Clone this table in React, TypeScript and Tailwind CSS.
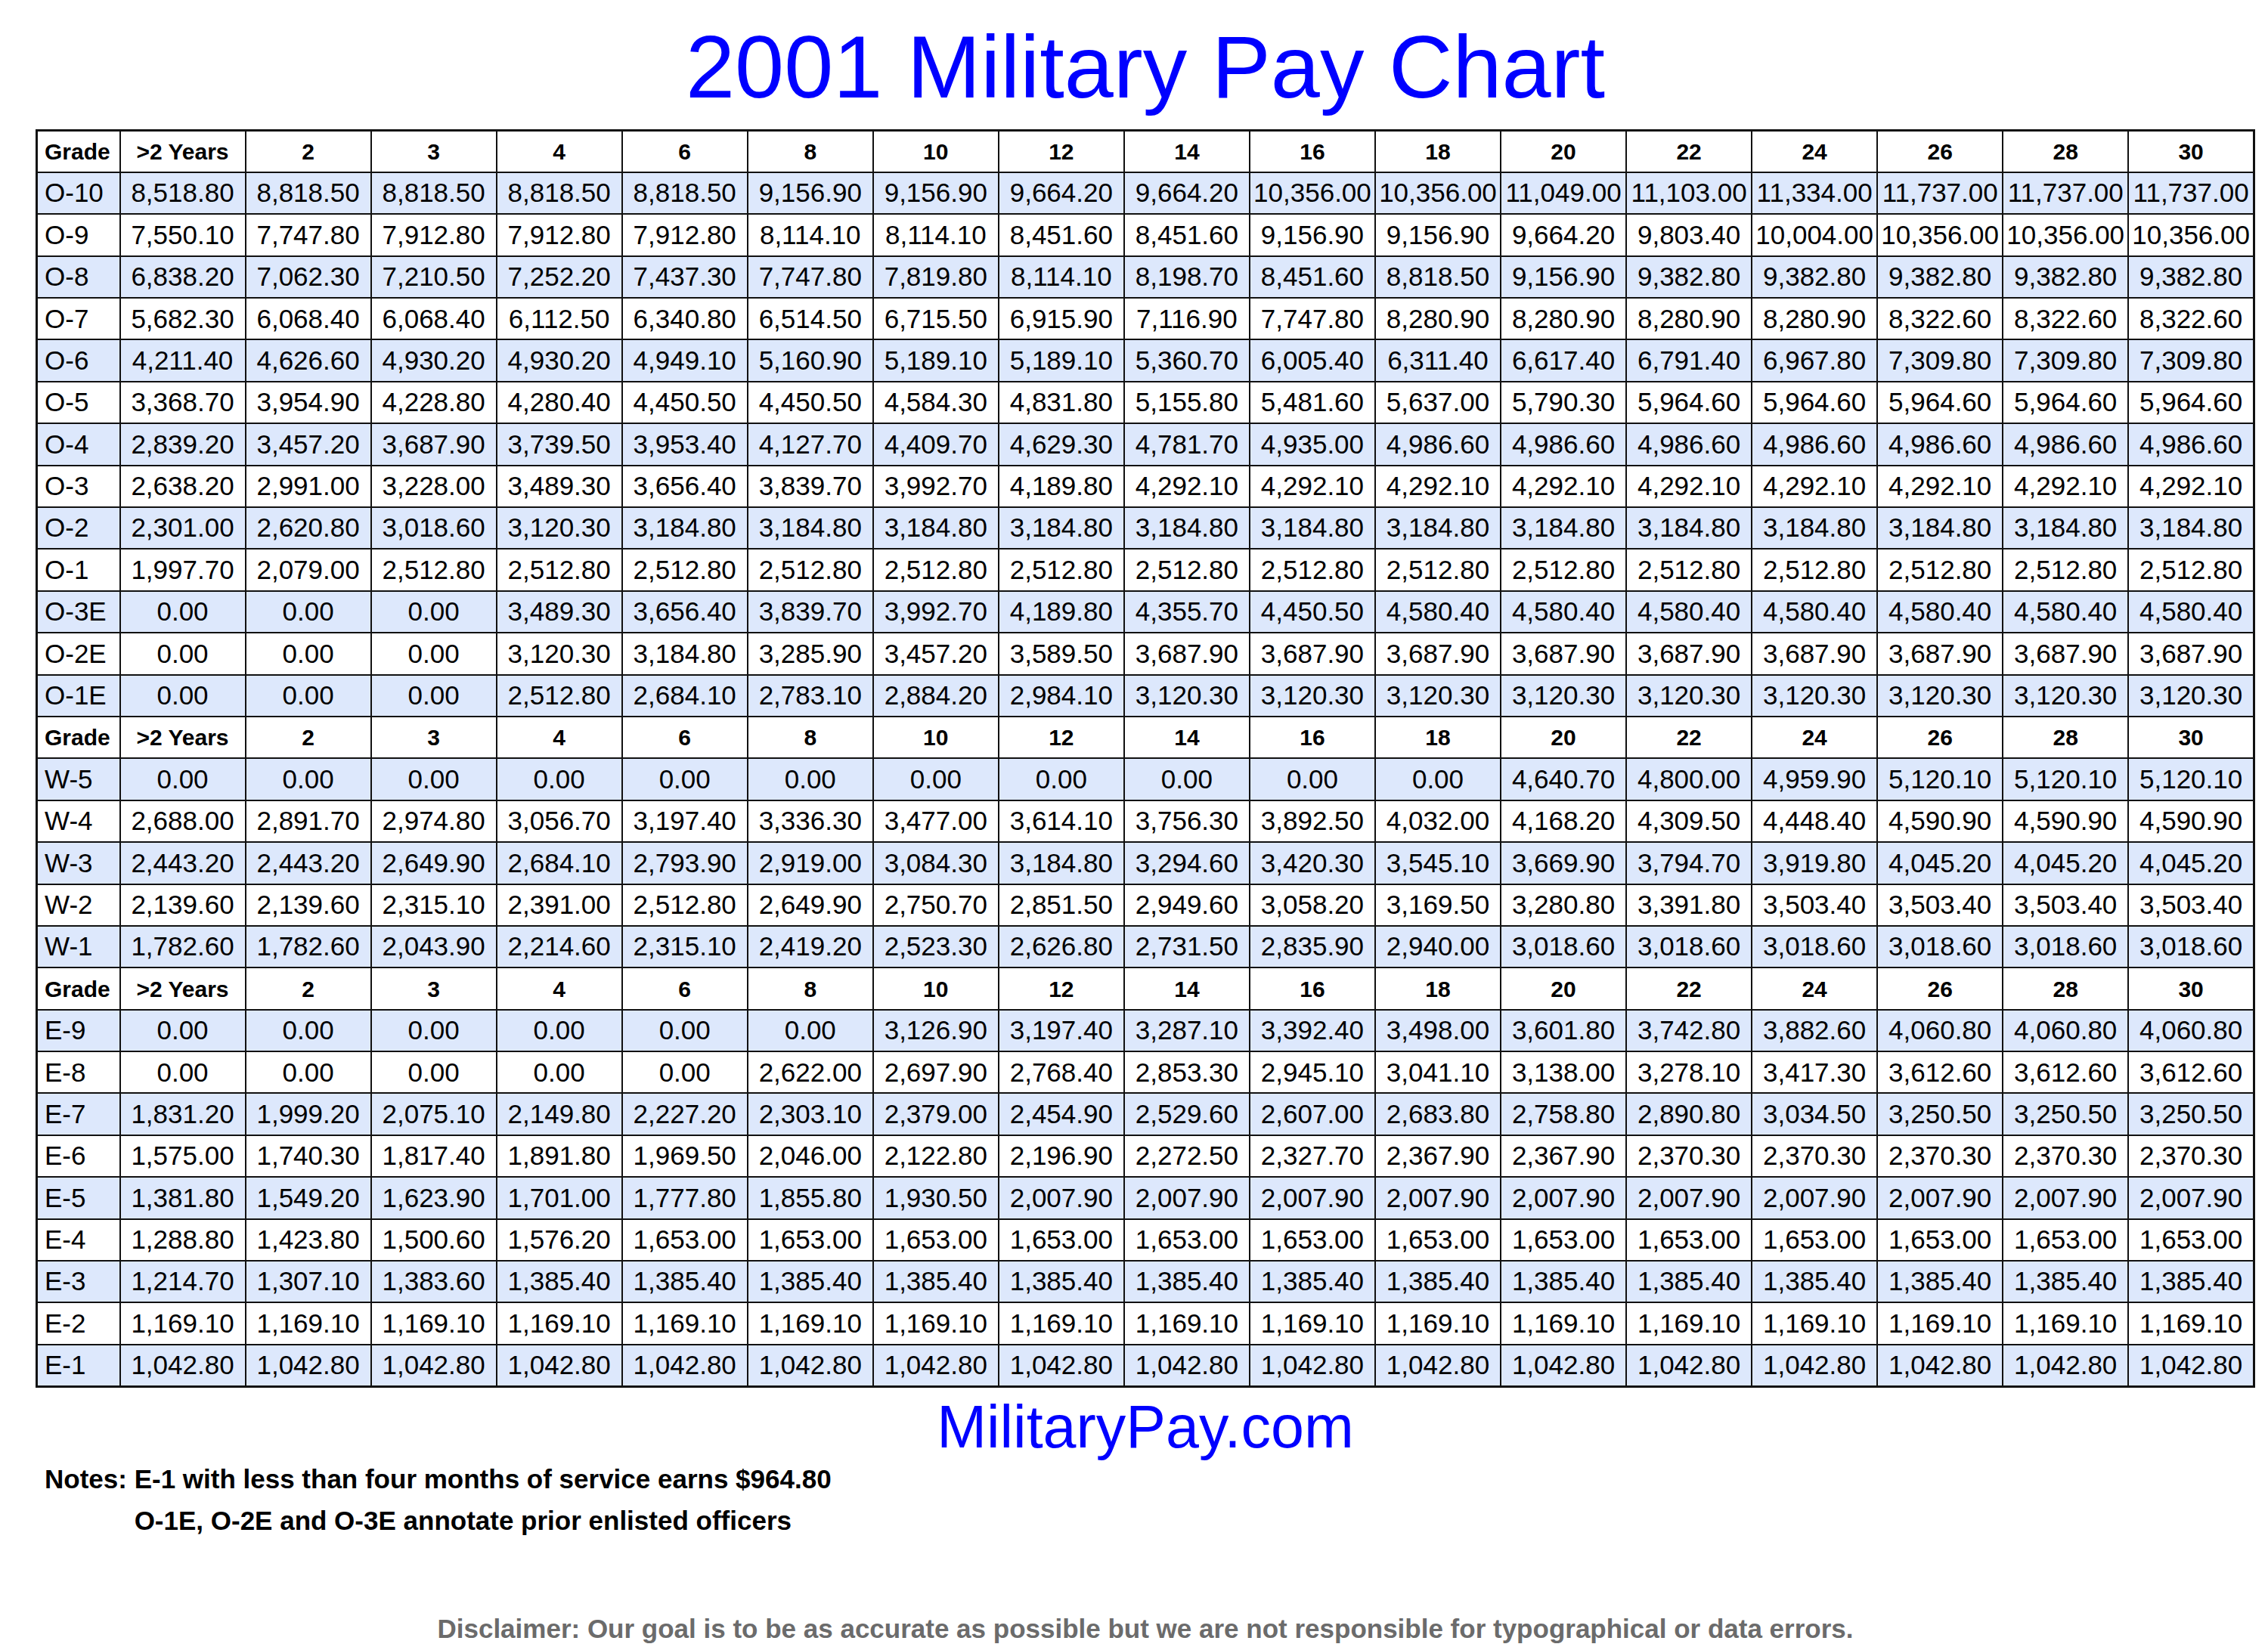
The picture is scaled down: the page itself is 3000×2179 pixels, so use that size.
import {Fragment} from "react";

const cols = ["Grade", ">2 Years", "2", "3", "4", "6", "8", "10", "12", "14", "16", "18", "20", "22", "24", "26", "28", "30"];

// repeat the last value until the row has 17 pay columns
const fill = (vals: string[]) => {
  const out = [...vals];
  while (out.length < 17) out.push(vals[vals.length - 1]);
  return out;
};

const zeros = (n: number) => Array(n).fill("0.00") as string[];

type Row = [string, string[]];

const officers: Row[] = [
  ["O-10", fill(["8,518.80", "8,818.50", "8,818.50", "8,818.50", "8,818.50", "9,156.90", "9,156.90", "9,664.20", "9,664.20", "10,356.00", "10,356.00", "11,049.00", "11,103.00", "11,334.00", "11,737.00"])],
  ["O-9", fill(["7,550.10", "7,747.80", "7,912.80", "7,912.80", "7,912.80", "8,114.10", "8,114.10", "8,451.60", "8,451.60", "9,156.90", "9,156.90", "9,664.20", "9,803.40", "10,004.00", "10,356.00"])],
  ["O-8", fill(["6,838.20", "7,062.30", "7,210.50", "7,252.20", "7,437.30", "7,747.80", "7,819.80", "8,114.10", "8,198.70", "8,451.60", "8,818.50", "9,156.90", "9,382.80"])],
  ["O-7", fill(["5,682.30", "6,068.40", "6,068.40", "6,112.50", "6,340.80", "6,514.50", "6,715.50", "6,915.90", "7,116.90", "7,747.80", "8,280.90", "8,280.90", "8,280.90", "8,280.90", "8,322.60"])],
  ["O-6", fill(["4,211.40", "4,626.60", "4,930.20", "4,930.20", "4,949.10", "5,160.90", "5,189.10", "5,189.10", "5,360.70", "6,005.40", "6,311.40", "6,617.40", "6,791.40", "6,967.80", "7,309.80"])],
  ["O-5", fill(["3,368.70", "3,954.90", "4,228.80", "4,280.40", "4,450.50", "4,450.50", "4,584.30", "4,831.80", "5,155.80", "5,481.60", "5,637.00", "5,790.30", "5,964.60"])],
  ["O-4", fill(["2,839.20", "3,457.20", "3,687.90", "3,739.50", "3,953.40", "4,127.70", "4,409.70", "4,629.30", "4,781.70", "4,935.00", "4,986.60"])],
  ["O-3", fill(["2,638.20", "2,991.00", "3,228.00", "3,489.30", "3,656.40", "3,839.70", "3,992.70", "4,189.80", "4,292.10"])],
  ["O-2", fill(["2,301.00", "2,620.80", "3,018.60", "3,120.30", "3,184.80"])],
  ["O-1", fill(["1,997.70", "2,079.00", "2,512.80"])],
  ["O-3E", fill([...zeros(3), "3,489.30", "3,656.40", "3,839.70", "3,992.70", "4,189.80", "4,355.70", "4,450.50", "4,580.40"])],
  ["O-2E", fill([...zeros(3), "3,120.30", "3,184.80", "3,285.90", "3,457.20", "3,589.50", "3,687.90"])],
  ["O-1E", fill([...zeros(3), "2,512.80", "2,684.10", "2,783.10", "2,884.20", "2,984.10", "3,120.30"])],
];

const warrants: Row[] = [
  ["W-5", fill([...zeros(11), "4,640.70", "4,800.00", "4,959.90", "5,120.10"])],
  ["W-4", fill(["2,688.00", "2,891.70", "2,974.80", "3,056.70", "3,197.40", "3,336.30", "3,477.00", "3,614.10", "3,756.30", "3,892.50", "4,032.00", "4,168.20", "4,309.50", "4,448.40", "4,590.90"])],
  ["W-3", fill(["2,443.20", "2,443.20", "2,649.90", "2,684.10", "2,793.90", "2,919.00", "3,084.30", "3,184.80", "3,294.60", "3,420.30", "3,545.10", "3,669.90", "3,794.70", "3,919.80", "4,045.20"])],
  ["W-2", fill(["2,139.60", "2,139.60", "2,315.10", "2,391.00", "2,512.80", "2,649.90", "2,750.70", "2,851.50", "2,949.60", "3,058.20", "3,169.50", "3,280.80", "3,391.80", "3,503.40"])],
  ["W-1", fill(["1,782.60", "1,782.60", "2,043.90", "2,214.60", "2,315.10", "2,419.20", "2,523.30", "2,626.80", "2,731.50", "2,835.90", "2,940.00", "3,018.60"])],
];

const enlisted: Row[] = [
  ["E-9", fill([...zeros(6), "3,126.90", "3,197.40", "3,287.10", "3,392.40", "3,498.00", "3,601.80", "3,742.80", "3,882.60", "4,060.80"])],
  ["E-8", fill([...zeros(5), "2,622.00", "2,697.90", "2,768.40", "2,853.30", "2,945.10", "3,041.10", "3,138.00", "3,278.10", "3,417.30", "3,612.60"])],
  ["E-7", fill(["1,831.20", "1,999.20", "2,075.10", "2,149.80", "2,227.20", "2,303.10", "2,379.00", "2,454.90", "2,529.60", "2,607.00", "2,683.80", "2,758.80", "2,890.80", "3,034.50", "3,250.50"])],
  ["E-6", fill(["1,575.00", "1,740.30", "1,817.40", "1,891.80", "1,969.50", "2,046.00", "2,122.80", "2,196.90", "2,272.50", "2,327.70", "2,367.90", "2,367.90", "2,370.30"])],
  ["E-5", fill(["1,381.80", "1,549.20", "1,623.90", "1,701.00", "1,777.80", "1,855.80", "1,930.50", "2,007.90"])],
  ["E-4", fill(["1,288.80", "1,423.80", "1,500.60", "1,576.20", "1,653.00"])],
  ["E-3", fill(["1,214.70", "1,307.10", "1,383.60", "1,385.40"])],
  ["E-2", fill(["1,169.10"])],
  ["E-1", fill(["1,042.80"])],
];

const sections = [officers, warrants, enlisted];

const cell = "border-2 border-[#111] h-[55.4px] p-0";

const HeaderRow = () => (
  <tr className="bg-white">
    {cols.map((c, i) => (
      <td
        key={c}
        className={`${cell} text-[30px] font-bold ${i === 0 ? "text-left pl-[9px]" : "text-center"}`}>
        {c}
      </td>
    ))}
  </tr>
);

const App = () => {
  return (
    <div className="w-[3000px] min-h-[2179px] bg-white text-black font-['Liberation_Sans',Arial,sans-serif]">
      <div className="ml-[47px] w-[2936px]">
        <h1 className="pt-[30px] text-center text-[117px] leading-[117px] text-[#0000ff]">
          2001 Military Pay Chart
        </h1>

        <table className="mt-[24px] w-[2936px] table-fixed border-collapse border-[3px] border-[#111]">
          <colgroup>
            <col className="w-[110px]" />
            {cols.slice(1).map((c) => (
              <col key={c} />
            ))}
          </colgroup>
          <tbody>
            {sections.map((rows, si) => (
              <Fragment key={si}>
                <HeaderRow />
                {rows.map(([grade, vals], i) => (
                  <tr key={grade} className={i % 2 === 0 ? "bg-[#dde8fc]" : "bg-white"}>
                    <td className={`${cell} text-left pl-[9px] text-[35px]`}>{grade}</td>
                    {vals.map((v, j) => (
                      <td key={j} className={`${cell} text-center text-[35px] whitespace-nowrap`}>
                        {v}
                      </td>
                    ))}
                  </tr>
                ))}
              </Fragment>
            ))}
          </tbody>
        </table>

        <p className="mt-[13px] text-center text-[79px] leading-[78px] text-[#0000ff]">
          MilitaryPay.com
        </p>

        <div className="mt-[2px] pl-[12px] flex text-[35px] leading-[55px] font-bold">
          <span className="whitespace-pre">Notes: </span>
          <div>
            <p>E-1 with less than four months of service earns $964.80</p>
            <p>O-1E, O-2E and O-3E annotate prior enlisted officers</p>
          </div>
        </div>

        <p className="mt-[96px] text-center text-[35px] leading-[40px] font-bold text-[#6b6b6b]">
          Disclaimer: Our goal is to be as accurate as possible but we are not responsible for
          typographical or data errors.
        </p>
      </div>
    </div>
  );
};

export default App;
